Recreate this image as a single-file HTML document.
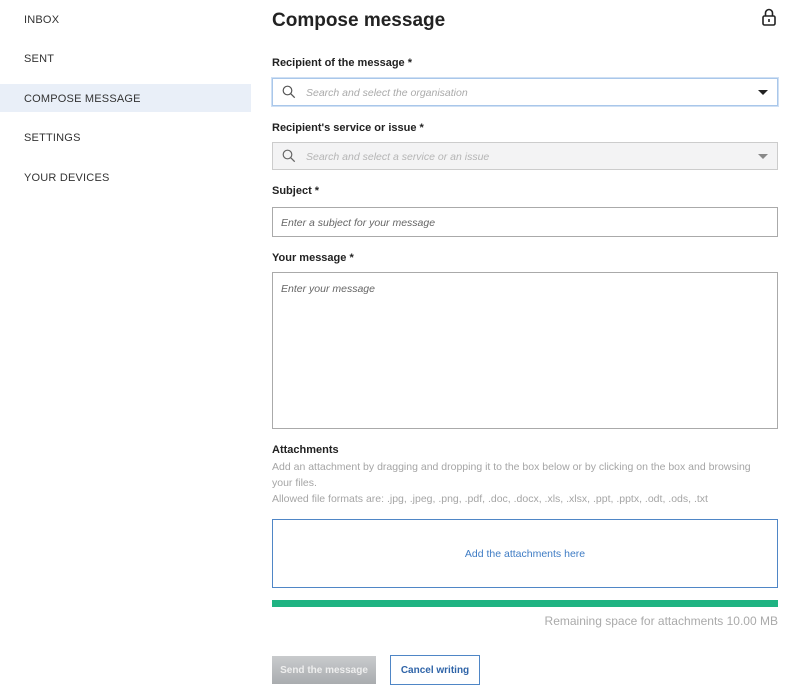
<!DOCTYPE html><html><head><style>
body{margin:0;width:791px;height:699px;background:#fff;font-family:"Liberation Sans",sans-serif;position:relative;overflow:hidden;color:#222}
.a{position:absolute}
.nav{left:24px;font-size:11px;color:#333;letter-spacing:.2px}
.lbl{left:272px;font-size:11px;font-weight:bold;color:#222}
.inp{left:272px;width:504px;border:1px solid #aaa;background:#fff;box-sizing:content-box}
.ph{font-size:10.5px;font-style:italic;color:#aaa;position:absolute}
.sm{left:272px;font-size:10.5px;color:#a5a5a5}
</style></head><body>
<div class="a" style="left:0;top:84px;width:251px;height:28px;background:#e9eff8"></div>
<div class="a nav" style="top:14px">INBOX</div>
<div class="a nav" style="top:53px">SENT</div>
<div class="a nav" style="top:93px">COMPOSE MESSAGE</div>
<div class="a nav" style="top:132px">SETTINGS</div>
<div class="a nav" style="top:172px">YOUR DEVICES</div>
<div class="a" style="left:272px;top:10px;font-size:19px;font-weight:bold;color:#222">Compose message</div>
<svg class="a" style="left:761px;top:8px" width="16" height="18" viewBox="0 0 16 18"><path d="M4.5 8V5a3.5 3.5 0 0 1 7 0V8" fill="none" stroke="#222" stroke-width="1.6"/><rect x="2" y="8" width="12" height="9" rx="1.5" fill="none" stroke="#222" stroke-width="1.6"/><path d="M8 11v3" stroke="#222" stroke-width="1.6"/></svg>
<div class="a lbl" style="top:57px">Recipient of the message *</div>
<div class="a inp" style="top:78px;height:26px;border-color:#a9c7ea;border-width:1px;outline:1px solid #cfe0f4"><svg class="a" style="left:9px;top:6px" width="14" height="14"><circle cx="5.5" cy="5.5" r="4.3" fill="none" stroke="#555" stroke-width="1.2"/><path d="M8.7 8.7l4 4" stroke="#555" stroke-width="1.3"/></svg><span class="ph" style="left:33px;top:8px">Search and select the organisation</span><div class="a" style="right:9px;top:11px;border:5px solid transparent;border-top:5px solid #222;border-bottom:0"></div></div>
<div class="a lbl" style="top:122px">Recipient's service or issue *</div>
<div class="a inp" style="top:142px;height:26px;background:#f3f3f4;border-color:#ccc"><svg class="a" style="left:9px;top:6px" width="14" height="14"><circle cx="5.5" cy="5.5" r="4.3" fill="none" stroke="#666" stroke-width="1.2"/><path d="M8.7 8.7l4 4" stroke="#666" stroke-width="1.3"/></svg><span class="ph" style="left:33px;top:8px;color:#b5b5b5">Search and select a service or an issue</span><div class="a" style="right:9px;top:11px;border:5px solid transparent;border-top:5px solid #888;border-bottom:0"></div></div>
<div class="a lbl" style="top:185px">Subject *</div>
<div class="a inp" style="top:207px;height:28px"><span class="ph" style="left:8px;top:9px;color:#666">Enter a subject for your message</span></div>
<div class="a lbl" style="top:252px">Your message *</div>
<div class="a inp" style="top:272px;height:155px"><span class="ph" style="left:8px;top:10px;color:#666">Enter your message</span></div>
<div class="a lbl" style="top:444px">Attachments</div>
<div class="a sm" style="top:459px;width:500px;line-height:16px">Add an attachment by dragging and dropping it to the box below or by clicking on the box and browsing your files.<br>Allowed file formats are: .jpg, .jpeg, .png, .pdf, .doc, .docx, .xls, .xlsx, .ppt, .pptx, .odt, .ods, .txt</div>
<div class="a" style="left:272px;top:519px;width:504px;height:67px;border:1px solid #4f86c6;text-align:center;line-height:69px;font-size:10.5px;color:#3f7cc4">Add the attachments here</div>
<div class="a" style="left:272px;top:600px;width:506px;height:7px;background:#1fb382"></div>
<div class="a" style="right:13px;top:614px;font-size:12px;color:#aaa">Remaining space for attachments 10.00 MB</div>
<div class="a" style="left:272px;top:656px;width:104px;height:28px;background:linear-gradient(#c9cbcd,#a9acaf);color:#eee;font-size:10px;text-align:center;line-height:30px;font-weight:bold">Send the message</div>
<div class="a" style="left:390px;top:655px;width:88px;height:28px;border:1px solid #4f86c6;color:#2f64a8;font-size:10px;text-align:center;line-height:30px;font-weight:bold">Cancel writing</div>
</body></html>
